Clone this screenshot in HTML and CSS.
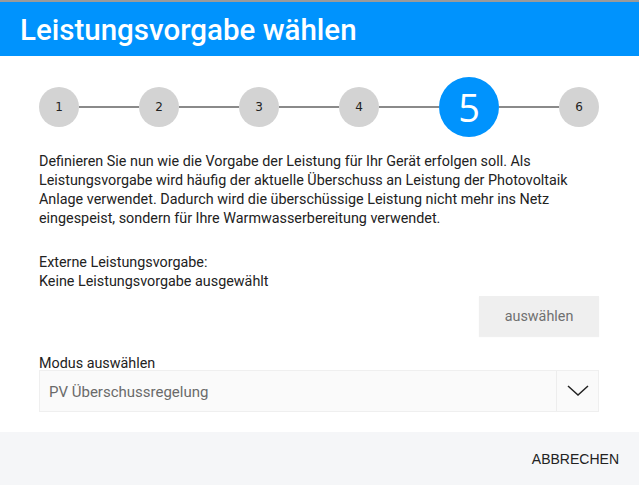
FILE: index.html
```html
<!DOCTYPE html>
<html lang="de">
<head>
  <meta charset="UTF-8">
  <title>Leistungsvorgabe wählen</title>
  <link rel="stylesheet" href="styles.css">
</head>
<body>

<div class="dialog">
  <div class="dialog-header">Leistungsvorgabe wählen</div>

  <div class="dialog-body">
    <div class="stepper">
      <div class="step">1</div>
      <div class="step-line"></div>
      <div class="step">2</div>
      <div class="step-line"></div>
      <div class="step">3</div>
      <div class="step-line"></div>
      <div class="step">4</div>
      <div class="step-line"></div>
      <div class="step active">5</div>
      <div class="step-line"></div>
      <div class="step">6</div>
    </div>

    <p class="intro">
      Definieren Sie nun wie die Vorgabe der Leistung für Ihr Gerät erfolgen soll. Als
      Leistungsvorgabe wird häufig der aktuelle Überschuss an Leistung der Photovoltaik
      Anlage verwendet. Dadurch wird die überschüssige Leistung nicht mehr ins Netz
      eingespeist, sondern für Ihre Warmwasserbereitung verwendet.
    </p>

    <p class="source">
      Externe Leistungsvorgabe:<br>
      Keine Leistungsvorgabe ausgewählt
    </p>

    <div class="actions">
      <button class="btn-select">auswählen</button>
    </div>

    <label class="field-label">Modus auswählen</label>
    <div class="select">
      <div class="select-value">PV Überschussregelung</div>
      <div class="select-arrow">
        <svg width="22" height="12" viewBox="0 0 22 12">
          <path d="M1 1 L11 10 L21 1" fill="none" stroke="#222" stroke-width="1.5"/>
        </svg>
      </div>
    </div>
  </div>

  <div class="dialog-footer">
    <button class="btn-cancel">ABBRECHEN</button>
  </div>
</div>

</body>
</html>
```
FILE: styles.css
```css
body, html {
  margin: 0;
  background: #fff;
  font-family: Roboto, "Liberation Sans", sans-serif;
  color: #222;
}
.dialog {
  border-top: 2px solid #9a9a9a;
  width: 639px;
  height: 483px;
  display: flex;
  flex-direction: column;
}
.dialog-header {
  background: #0093fd;
  color: #fff;
  font-size: 29.5px;
  font-weight: 500;
  height: 54px;
  line-height: 56px;
  padding-left: 20px;
}
.dialog-body {
  flex: 1;
  padding: 21px 40px 0 39px;
}
.stepper {
  display: flex;
  align-items: center;
  height: 60px;
}
.step {
  width: 40px;
  height: 40px;
  border-radius: 50%;
  background: #d3d3d3;
  color: #222;
  font-family: "DejaVu Sans", sans-serif;
  font-size: 12px;
  display: flex;
  align-items: center;
  justify-content: center;
  flex-shrink: 0;
}
.step.active {
  width: 60px;
  height: 60px;
  background: #0093fd;
  color: #fff;
  font-family: "Open Sans", sans-serif;
  font-size: 38px;
}
.step-line {
  flex: 1;
  height: 2px;
  background: #8a8a8a;
}
.intro {
  margin: 15px 0 0;
  font-size: 14.35px;
  line-height: 19px;
}
.source {
  margin: 25px 0 0;
  font-size: 14.35px;
  line-height: 19px;
}
.actions {
  display: flex;
  justify-content: flex-end;
  margin-top: 5px;
}
.btn-select {
  width: 120px;
  height: 40px;
  border: none;
  background: #efefef;
  box-shadow: 0 1px 1px rgba(0,0,0,0.06);
  color: #707070;
  font-family: Roboto, "Liberation Sans", sans-serif;
  font-size: 14.35px;
}
.field-label {
  display: block;
  margin-top: 22px;
  font-size: 14.35px;
  line-height: 12px;
  height: 12px;
}
.select {
  display: flex;
  height: 40px;
  border: 1px solid #efefef;
  background: #fafafa;
}
.select-value {
  flex: 1;
  padding-left: 9px;
  line-height: 42px;
  font-size: 15px;
  color: #6a6a6a;
}
.select-arrow {
  width: 41px;
  border-left: 1px solid #ededed;
  display: flex;
  align-items: center;
  justify-content: center;
}
.dialog-footer {
  background: #f5f6f8;
  height: 53px;
  display: flex;
  align-items: center;
  justify-content: flex-end;
  padding-right: 20px;
}
.btn-cancel {
  border: none;
  background: none;
  padding: 0;
  font-family: "Liberation Sans", Arial, sans-serif;
  font-size: 14px;
  color: #222;
}
```
